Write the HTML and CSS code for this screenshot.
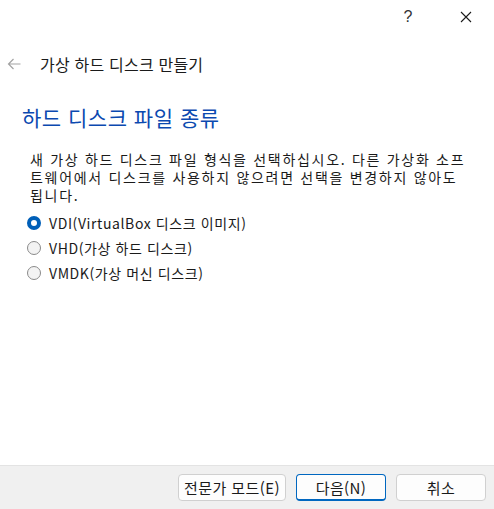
FILE: index.html
```html
<!DOCTYPE html>
<html lang="ko">
<head>
    <meta charset="UTF-8">
    <title>가상 하드 디스크 만들기</title>
    <link rel="stylesheet" href="styles.css">
</head>
<body>

<div class="window">
    <div class="titlebar">
        <span class="tb-btn help">?</span>
        <span class="tb-btn">
            <svg width="12" height="12" viewBox="0 0 12 12"><path d="M1 1L11 11M11 1L1 11" stroke="#1a1a1a" stroke-width="1.1" fill="none"/></svg>
        </span>
    </div>

    <div class="nav">
        <svg class="back" width="14" height="12" viewBox="0 0 14 12"><path d="M13.5 6H1.5M6.5 1L1.5 6L6.5 11" stroke="#a3a3a3" stroke-width="1.2" fill="none"/></svg>
        <span class="nav-title">가상 하드 디스크 만들기</span>
    </div>

    <h2 class="heading">하드 디스크 파일 종류</h2>

    <p class="desc">새 가상 하드 디스크 파일 형식을 선택하십시오. 다른 가상화 소프트웨어에서 디스크를 사용하지 않으려면 선택을 변경하지 않아도 됩니다.</p>

    <div class="options">
        <label class="opt"><span class="radio checked"></span>VDI(VirtualBox 디스크 이미지)</label>
        <label class="opt"><span class="radio"></span>VHD(가상 하드 디스크)</label>
        <label class="opt"><span class="radio"></span>VMDK(가상 머신 디스크)</label>
    </div>

    <div class="footer">
        <button class="btn wide" type="button">전문가 모드(E)</button>
        <button class="btn primary" type="button">다음(N)</button>
        <button class="btn" type="button">취소</button>
    </div>
</div>

</body>
</html>
```

FILE: styles.css
```css
*{
    padding: 0;
    margin: 0;
    box-sizing: border-box;
}
body {
    background: #ffffff;
    font-family: "Noto Sans CJK KR", "Noto Sans", sans-serif;
    color: #1a1a1a;
}

.window{
    display: flex;
    flex-direction: column;
    height: 509px;
    width: 494px;
}

.titlebar{
    height: 34px;
    display: flex;
    justify-content: flex-end;
    align-items: center;
    gap: 12px;
    padding-right: 5px;
}

.tb-btn{
    width: 46px;
    height: 34px;
    display: flex;
    align-items: center;
    justify-content: center;
    font-size: 15px;
}

.help{
    font-family: "Liberation Sans", sans-serif;
    font-size: 16px;
    color: #333;
}

.nav{
    height: 28px;
    margin-top: 16px;
    display: flex;
    align-items: center;
    padding-left: 7px;
}

.back{
    margin-right: 19px;
}

.nav-title{
    font-size: 16px;
    letter-spacing: 0.2px;
}

.heading{
    margin-top: 25px;
    padding-left: 22px;
    font-size: 21px;
    line-height: 28px;
    font-weight: normal;
    color: #0b49b0;
    letter-spacing: 0.5px;
}

.desc{
    margin-top: 19px;
    padding-left: 30px;
    padding-right: 22px;
    font-size: 14px;
    line-height: 18px;
    letter-spacing: 1.7px;
}

.options{
    margin-top: 6px;
    padding-left: 27px;
}

.opt{
    height: 25px;
    display: flex;
    align-items: center;
    font-size: 14px;
    letter-spacing: 0.6px;
}

.radio{
    width: 14px;
    height: 14px;
    border-radius: 50%;
    border: 1px solid #8a8a8a;
    background: #f3f3f3;
    margin-right: 8px;
}

.radio.checked{
    border: 4px solid #005fb8;
    background: #ffffff;
}

.footer{
    margin-top: auto;
    height: 44px;
    background: #f0f0f0;
    border-top: 1px solid #e3e3e3;
    display: flex;
    justify-content: flex-end;
    align-items: center;
    gap: 10px;
    padding-right: 8px;
}

.btn{
    width: 90px;
    height: 27px;
    background: #fdfdfd;
    border: 1px solid #d0d0d0;
    border-radius: 4px;
    font-family: "Noto Sans CJK KR", sans-serif;
    font-size: 15px;
    letter-spacing: 0.4px;
    color: #1a1a1a;
}

.btn.wide{
    width: 108px;
}

.btn.primary{
    border-color: #0067c0;
    border-bottom-width: 2px;
}
```
